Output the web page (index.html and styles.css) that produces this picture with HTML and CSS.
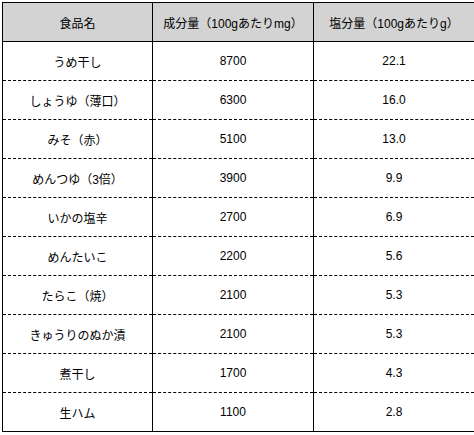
FILE: index.html
```html
<!DOCTYPE html>
<html lang="ja">
<head>
<meta charset="utf-8">
<link rel="stylesheet" href="styles.css">
</head>
<body>
<table class="salt">
  <thead>
    <tr><th class="c1">食品名</th><th class="c2">成分量（100gあたりmg）</th><th class="c3">塩分量（100gあたりg）</th></tr>
  </thead>
  <tbody>
    <tr><td>うめ干し</td><td>8700</td><td>22.1</td></tr>
    <tr><td>しょうゆ（薄口）</td><td>6300</td><td>16.0</td></tr>
    <tr><td>みそ（赤）</td><td>5100</td><td>13.0</td></tr>
    <tr><td>めんつゆ（3倍）</td><td>3900</td><td>9.9</td></tr>
    <tr><td>いかの塩辛</td><td>2700</td><td>6.9</td></tr>
    <tr><td>めんたいこ</td><td>2200</td><td>5.6</td></tr>
    <tr><td>たらこ（焼）</td><td>2100</td><td>5.3</td></tr>
    <tr><td>きゅうりのぬか漬</td><td>2100</td><td>5.3</td></tr>
    <tr><td>煮干し</td><td>1700</td><td>4.3</td></tr>
    <tr><td>生ハム</td><td>1100</td><td>2.8</td></tr>
  </tbody>
</table>
</body>
</html>
```
FILE: styles.css
```css
html, body {
  margin: 0;
  padding: 0;
  background: #fff;
}
body {
  padding: 2px 0 0 2px;
  font-family: "Liberation Sans", "Noto Sans CJK JP", sans-serif;
  font-size: 12px;
  color: #000;
}
.salt {
  border-collapse: collapse;
  width: 469px;
  border: 1px solid #000;
  table-layout: fixed;
}
.salt th, .salt td {
  height: 38px;
  padding: 0;
  text-align: center;
  vertical-align: middle;
  border-left: 1px solid #000;
  border-right: 1px solid #000;
  font-weight: normal;
}
.salt th {
  background: #d3d3d3;
  border-bottom: 1px solid #000;
}
.salt td {
  border-top: 1px dashed #000;
}
.salt tbody tr:first-child td {
  border-top: 1px solid #000;
}
.c1 { width: 149px; }
.c2 { width: 160px; }
.c3 { width: 160px; }
```
